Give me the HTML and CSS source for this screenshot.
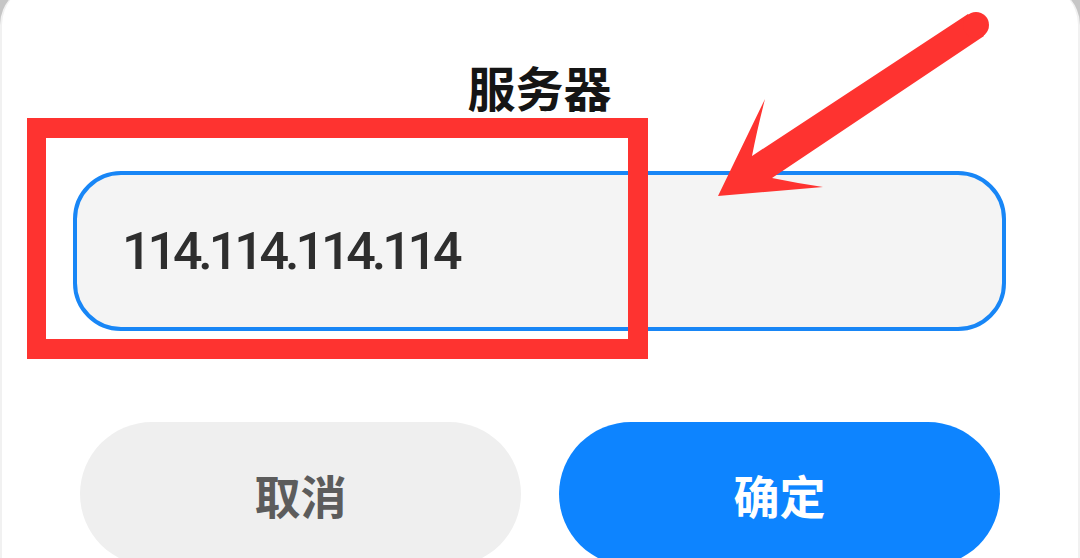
FILE: index.html
```html
<!DOCTYPE html>
<html lang="zh-CN">
<head>
<meta charset="utf-8">
<title>服务器</title>
<link rel="stylesheet" href="styles.css">
</head>
<body>
<div class="sheet">
  <h1 class="title">服务器</h1>
  <div class="field"><span class="value">114.114.114.114</span></div>
  <div class="actions">
    <button class="btn btn-cancel">取消</button>
    <button class="btn btn-ok">确定</button>
  </div>
</div>
<div class="mark-box"></div>
<svg class="mark-arrow" width="1080" height="558" viewBox="0 0 1080 558">
  <path d="M718 196 L765 99 Q757 130 752 156 L968 14 L984 36 L772 178 Q796 183 823 187 Z" fill="#fe3330"/>
  <circle cx="976" cy="25" r="13" fill="#fe3330"/>
</svg>
</body>
</html>
```
FILE: styles.css
```css
html, body {
  margin: 0;
  padding: 0;
}
body {
  width: 1080px;
  height: 558px;
  overflow: hidden;
  background: #c6c6c6;
  position: relative;
  font-family: "Noto Sans CJK SC", "Noto Sans", sans-serif;
}
.sheet {
  margin-top: -15px;
  height: 620px;
  background: #ffffff;
  border-radius: 40px 40px 0 0;
  box-sizing: border-box;
  padding: 71px 72px 0 71px;
  border-left: 2px solid #f1f1f1;
  border-right: 2px solid #f1f1f1;
}
.title {
  margin: 0;
  height: 60px;
  line-height: 60px;
  text-align: center;
  font-size: 48px;
  font-weight: 700;
  color: #151515;
  font-family: "Noto Sans CJK SC", sans-serif;
}
.field {
  margin-top: 55px;
  height: 160px;
  box-sizing: border-box;
  border: 4px solid #1886f6;
  border-radius: 48px;
  background: #f4f4f4;
  display: flex;
  align-items: center;
  padding-left: 45px;
}
.value {
  font-family: Roboto, "Noto Sans", sans-serif;
  font-weight: 500;
  font-size: 52px;
  letter-spacing: -4.1px;
  color: #2e2e2e;
}
.actions {
  margin: 91px 6px 0 7px;
  display: grid;
  grid-template-columns: 1fr 1fr;
  gap: 38px;
}
.btn {
  height: 144px;
  border: none;
  border-radius: 72px;
  font-family: "Noto Sans CJK SC", sans-serif;
  font-size: 46px;
  font-weight: 700;
  padding: 0;
}
.btn-cancel {
  background: #efefef;
  color: #5c5c5c;
}
.btn-ok {
  background: #0d84ff;
  color: #ffffff;
}
.mark-box {
  position: absolute;
  left: 27px;
  top: 118px;
  width: 621px;
  height: 241px;
  box-sizing: border-box;
  border: 20px solid #fe3330;
  border-left-width: 19px;
}
.mark-arrow {
  position: absolute;
  left: 0;
  top: 0;
  pointer-events: none;
}
```
